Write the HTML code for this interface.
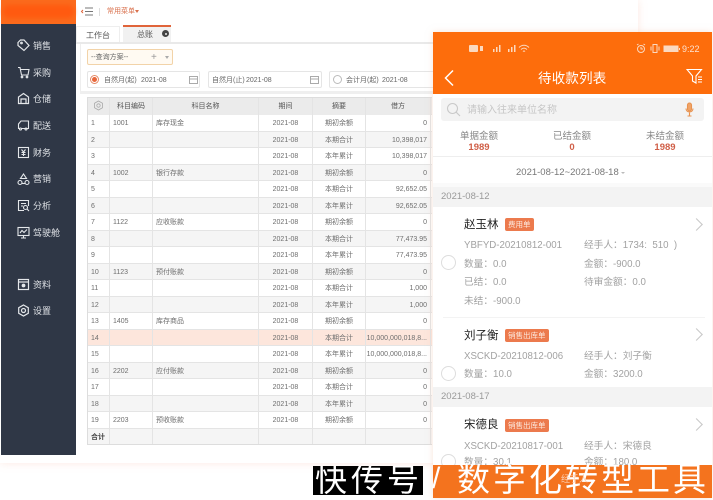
<!DOCTYPE html>
<html><head><meta charset="utf-8">
<style>
*{box-sizing:border-box;margin:0;padding:0}
html,body{width:713px;height:500px;overflow:hidden;background:#fff}
body{position:relative;font-family:"Liberation Sans","Noto Sans CJK SC",sans-serif;color:#666}
#w{position:absolute;left:0;top:0;width:713px;height:500px;filter:blur(.35px)}
.a{position:absolute;white-space:nowrap}
.nav{position:absolute;left:33px;margin-top:1px;color:#dfe2e6;font-size:9px;line-height:14px;white-space:nowrap}
.ic{position:absolute;left:17px;margin-top:1px;width:13px;height:13px}
.tb{position:absolute;left:87px;top:97px;width:345px;height:348px;background:#fff;border:1px solid #ddd;border-right:0;overflow:hidden}
.r{position:absolute;left:0;width:344px;height:16.5px;border-bottom:1px solid #e4e4e4;font-size:7px;line-height:17px;color:#6e6e6e}
.r.g{background:#f5f5f5}
.r.h{background:#fde6dc}
.r span{position:absolute;top:0;height:16.5px;border-right:1px solid #e4e4e4;white-space:nowrap;overflow:hidden}
.c1{left:0;width:22px;padding-left:3px}
.c2{left:22px;width:43px;padding-left:3px}
.c3{left:65px;width:106px;padding-left:3px}
.c4{left:171px;width:54px;text-align:center}
.c5{left:225px;width:53px;text-align:center}
.c6{left:278px;width:65px;text-align:right;padding-right:3px}
.hd{background:#ebebeb;height:17px;line-height:17px;top:0;color:#555}
.inp{position:absolute;top:71px;height:17px;background:#fff;border:1px solid #e5e5e5;border-radius:2px;font-size:7px;line-height:17px;color:#666}
.radio{position:absolute;left:441px;width:15px;height:15px;border:1px solid #ddd;border-radius:50%;background:#fff}
.nm{position:absolute;left:464px;font-size:11.5px;line-height:14px;color:#222;white-space:nowrap}
.tag{position:absolute;left:505px;height:13px;background:#ec7a4d;color:#fde9df;font-size:7.5px;line-height:13px;border-radius:2px;padding:0 3px;white-space:nowrap}
.t{position:absolute;margin-top:1px;font-size:9.700px;line-height:12px;color:#a2a2a2;white-space:nowrap}
.chev{position:absolute;left:692px;width:9px;height:9px;border-top:1px solid #c8c8c8;border-right:1px solid #c8c8c8;transform:rotate(45deg)}
.day{position:absolute;left:433px;width:279px;height:20px;background:#f3f3f3;color:#999;font-size:9.5px;line-height:20px;padding-left:8px}
</style></head><body>
<div id="w">

<!-- desktop window -->
<div class="a" style="left:0;top:0;width:638px;height:463px;background:#fff;box-shadow:0 0 8px rgba(250,190,170,.35)"></div>
<div class="a" style="left:1px;top:0;width:75px;height:24px;background:#fb6a1c"></div>
<div class="a" style="left:3px;top:5px;width:71px;height:13px;background:#ff5a10;border-radius:6px;filter:blur(2px)"></div>
<div class="a" style="left:1px;top:24px;width:75px;height:431px;background:#2f3746"></div>
<div class="a" style="left:76px;top:24px;width:360px;height:431px;background:#fff"></div>

<!-- top bar -->
<svg class="a" style="left:80px;top:6px" width="14" height="11" viewBox="0 0 14 11" fill="none" stroke="#777" stroke-width="1"><path d="M5 2H13M5 5.500H13M5 9H13"/><path d="M3 4L1.500 5.500L3 7" stroke="#e0643a"/></svg>
<div class="a" style="left:99px;top:8px;width:1px;height:8px;background:#ddd"></div>
<div class="a" style="left:107px;top:6px;font-size:7px;line-height:11px;color:#d9704c">常用菜单</div>
<div class="a" style="left:135px;top:10px;border:2.500px solid transparent;border-top:3px solid #d9704c"></div>

<!-- tabs -->
<div class="a" style="left:76px;top:26px;width:44px;height:17px;background:#fff;border:1px solid #eee;border-bottom:0;font-size:8px;line-height:17px;color:#555;text-align:center">工作台</div>
<div class="a" style="left:123px;top:25px;width:48px;height:18px;background:#f1f1f1;border-top:2px solid #e0643a;font-size:8px;line-height:16px;color:#555;padding-left:14px">总账</div>
<div class="a" style="left:162px;top:30px;width:7px;height:7px;border-radius:50%;background:#444"></div>
<div class="a" style="left:164.500px;top:32.500px;width:2px;height:2px;border-radius:50%;background:#eee"></div>
<div class="a" style="left:76px;top:42px;width:360px;height:2px;background:#e9e9e9"></div>
<div class="a" style="left:80px;top:44px;width:356px;height:50px;background:#fff;border-left:1px solid #eee"></div>
<div class="a" style="left:80px;top:91px;width:356px;height:3px;background:#efefef"></div>

<!-- query -->
<div class="a" style="left:87px;top:49px;width:86px;height:16px;background:#fffaf2;border:1px solid #f2d3a8;border-radius:2px;font-size:7px;line-height:16px;color:#666;padding-left:3px">--查询方案--</div>
<div class="a" style="left:151px;top:52px;font-size:10px;line-height:11px;color:#999">+</div>
<div class="a" style="left:165px;top:56px;border:2.500px solid transparent;border-top:3px solid #aaa"></div>

<!-- date filters -->
<div class="inp" style="left:87px;width:113px"><span style="position:absolute;left:16px">自然月(起)</span><span style="position:absolute;left:53px">2021-08</span></div>
<div class="a" style="left:90px;top:75px;width:9px;height:9px;border:1px solid #e58a66;border-radius:50%"></div>
<div class="a" style="left:92px;top:77px;width:5px;height:5px;background:#e8663a;border-radius:50%"></div>
<svg class="a" style="left:189px;top:75px" width="9" height="9" viewBox="0 0 9 9" fill="none" stroke="#aaa"><rect x=".5" y="1.500" width="8" height="7"/><path d="M.5 4H8.500"/></svg>
<div class="inp" style="left:208px;width:114px"><span style="position:absolute;left:3px">自然月(止)</span><span style="position:absolute;left:37px">2021-08</span></div>
<svg class="a" style="left:310px;top:75px" width="9" height="9" viewBox="0 0 9 9" fill="none" stroke="#aaa"><rect x=".5" y="1.500" width="8" height="7"/><path d="M.5 4H8.500"/></svg>
<div class="inp" style="left:329px;width:110px"><span style="position:absolute;left:16px">会计月(起)</span><span style="position:absolute;left:52px">2021-08</span></div>
<div class="a" style="left:333px;top:75px;width:9px;height:9px;border:1px solid #bbb;border-radius:50%;background:#fff"></div>

<!-- sidebar -->
<svg class="ic" style="top:38px" viewBox="0 0 13 13" fill="none" stroke="#e4e7ea" stroke-width="1.200"><path d="M1 3.500L3.500 1H7L12 6.500L7 11.500L1 6.500Z"/><circle cx="4.500" cy="4" r=".8"/></svg><div class="nav" style="top:38px">销售</div>
<svg class="ic" style="top:65px" viewBox="0 0 13 13" fill="none" stroke="#e4e7ea" stroke-width="1.100"><path d="M1 1.500H3L4.500 9H11L12 3.500H3.500"/><circle cx="5" cy="11" r=".8"/><circle cx="10" cy="11" r=".8"/></svg><div class="nav" style="top:65px">采购</div>
<svg class="ic" style="top:91px" viewBox="0 0 13 13" fill="none" stroke="#e4e7ea" stroke-width="1.200"><path d="M1.500 11.500V5L6.500 1.500L11.500 5V11.500Z"/><path d="M4 11.500V7H9V11.500"/></svg><div class="nav" style="top:91px">仓储</div>
<svg class="ic" style="top:118px" viewBox="0 0 13 13" fill="none" stroke="#e4e7ea" stroke-width="1.100"><path d="M4 9.500H11.500V2H4L1.500 5V9.500H2.500"/><circle cx="3.500" cy="10" r="1"/><circle cx="9" cy="10" r="1"/></svg><div class="nav" style="top:118px">配送</div>
<svg class="ic" style="top:145px" viewBox="0 0 13 13" fill="none" stroke="#e4e7ea" stroke-width="1.100"><rect x="1.500" y="1.500" width="10" height="10"/><path d="M4.500 3.500L6.500 6L8.500 3.500M4.500 6.500H8.500M4.500 8.500H8.500M6.500 6V10"/></svg><div class="nav" style="top:145px">财务</div>
<svg class="ic" style="top:172px" viewBox="0 0 13 13" fill="none" stroke="#e4e7ea" stroke-width="1.100"><path d="M6.500 1L9.500 5.500H3.500Z"/><circle cx="3" cy="9.500" r="2"/><circle cx="10" cy="9.500" r="2"/><path d="M5 10.500H8"/></svg><div class="nav" style="top:171px">营销</div>
<svg class="ic" style="top:198px" viewBox="0 0 13 13" fill="none" stroke="#e4e7ea" stroke-width="1.100"><path d="M11.500 7V1.500H1.500V11.500H7"/><circle cx="8.500" cy="8.500" r="2"/><path d="M10 10L12 12M4 4.500H9M4 7H6"/></svg><div class="nav" style="top:198px">分析</div>
<svg class="ic" style="top:225px" viewBox="0 0 13 13" fill="none" stroke="#e4e7ea" stroke-width="1.100"><rect x="1" y="1.500" width="11" height="8"/><path d="M3 7L5 4.500L7 6.500L10 3.500M6.500 9.500V12M4 12H9"/></svg><div class="nav" style="top:225px">驾驶舱</div>
<svg class="ic" style="top:277px" viewBox="0 0 13 13" fill="none" stroke="#e4e7ea" stroke-width="1.200"><rect x="1.500" y="1.500" width="10" height="10"/><path d="M1.500 4H11.500"/><circle cx="6.500" cy="7.500" r="1.300" fill="#e4e7ea"/></svg><div class="nav" style="top:277px">资料</div>
<svg class="ic" style="top:303px" viewBox="0 0 13 13" fill="none" stroke="#e4e7ea" stroke-width="1.200"><path d="M6.500 1L11.300 3.750V9.250L6.500 12L1.700 9.250V3.750Z"/><circle cx="6.500" cy="6.500" r="2"/></svg><div class="nav" style="top:303px">设置</div>

<!-- table -->
<div class="tb">
<div class="r hd" style="height:17px;background:#ebebeb"><span class="c1 hd"></span><span class="c2 hd" style="text-align:center;padding:0">科目编码</span><span class="c3 hd" style="text-align:center;padding:0">科目名称</span><span class="c4 hd">期间</span><span class="c5 hd">摘要</span><span class="c6 hd" style="text-align:center;padding:0">借方</span></div>
<div class="r" style="top:17px"><span class="c1">1</span><span class="c2">1001</span><span class="c3">库存现金</span><span class="c4">2021-08</span><span class="c5">期初余额</span><span class="c6">0</span></div>
<div class="r g" style="top:33.500px"><span class="c1">2</span><span class="c2"></span><span class="c3"></span><span class="c4">2021-08</span><span class="c5">本期合计</span><span class="c6">10,398,017</span></div>
<div class="r" style="top:50px"><span class="c1">3</span><span class="c2"></span><span class="c3"></span><span class="c4">2021-08</span><span class="c5">本年累计</span><span class="c6">10,398,017</span></div>
<div class="r g" style="top:66.500px"><span class="c1">4</span><span class="c2">1002</span><span class="c3">银行存款</span><span class="c4">2021-08</span><span class="c5">期初余额</span><span class="c6">0</span></div>
<div class="r" style="top:83px"><span class="c1">5</span><span class="c2"></span><span class="c3"></span><span class="c4">2021-08</span><span class="c5">本期合计</span><span class="c6">92,652.05</span></div>
<div class="r g" style="top:99.500px"><span class="c1">6</span><span class="c2"></span><span class="c3"></span><span class="c4">2021-08</span><span class="c5">本年累计</span><span class="c6">92,652.05</span></div>
<div class="r" style="top:116px"><span class="c1">7</span><span class="c2">1122</span><span class="c3">应收账款</span><span class="c4">2021-08</span><span class="c5">期初余额</span><span class="c6">0</span></div>
<div class="r g" style="top:132.500px"><span class="c1">8</span><span class="c2"></span><span class="c3"></span><span class="c4">2021-08</span><span class="c5">本期合计</span><span class="c6">77,473.95</span></div>
<div class="r" style="top:149px"><span class="c1">9</span><span class="c2"></span><span class="c3"></span><span class="c4">2021-08</span><span class="c5">本年累计</span><span class="c6">77,473.95</span></div>
<div class="r g" style="top:165.500px"><span class="c1">10</span><span class="c2">1123</span><span class="c3">预付账款</span><span class="c4">2021-08</span><span class="c5">期初余额</span><span class="c6">0</span></div>
<div class="r" style="top:182px"><span class="c1">11</span><span class="c2"></span><span class="c3"></span><span class="c4">2021-08</span><span class="c5">本期合计</span><span class="c6">1,000</span></div>
<div class="r g" style="top:198.500px"><span class="c1">12</span><span class="c2"></span><span class="c3"></span><span class="c4">2021-08</span><span class="c5">本年累计</span><span class="c6">1,000</span></div>
<div class="r" style="top:215px"><span class="c1">13</span><span class="c2">1405</span><span class="c3">库存商品</span><span class="c4">2021-08</span><span class="c5">期初余额</span><span class="c6">0</span></div>
<div class="r h" style="top:231.500px"><span class="c1">14</span><span class="c2"></span><span class="c3"></span><span class="c4">2021-08</span><span class="c5">本期合计</span><span class="c6">10,000,000,018,8...</span></div>
<div class="r" style="top:248px"><span class="c1">15</span><span class="c2"></span><span class="c3"></span><span class="c4">2021-08</span><span class="c5">本年累计</span><span class="c6">10,000,000,018,8...</span></div>
<div class="r g" style="top:264.500px"><span class="c1">16</span><span class="c2">2202</span><span class="c3">应付账款</span><span class="c4">2021-08</span><span class="c5">期初余额</span><span class="c6">0</span></div>
<div class="r" style="top:281px"><span class="c1">17</span><span class="c2"></span><span class="c3"></span><span class="c4">2021-08</span><span class="c5">本期合计</span><span class="c6">0</span></div>
<div class="r g" style="top:297.500px"><span class="c1">18</span><span class="c2"></span><span class="c3"></span><span class="c4">2021-08</span><span class="c5">本年累计</span><span class="c6">0</span></div>
<div class="r" style="top:314px"><span class="c1">19</span><span class="c2">2203</span><span class="c3">预收账款</span><span class="c4">2021-08</span><span class="c5">期初余额</span><span class="c6">0</span></div>
<div class="r g" style="top:330.500px;height:17px"><span class="c1" style="font-weight:bold;color:#444">合计</span><span class="c2"></span><span class="c3"></span><span class="c4"></span><span class="c5"></span><span class="c6"></span></div>
</div>
<svg class="a" style="left:93px;top:100px" width="11" height="11" viewBox="0 0 11 11" fill="none" stroke="#aaa" stroke-width=".8"><path d="M5.500 1L9.500 3.250V7.750L5.500 10L1.500 7.750V3.250Z"/><circle cx="5.500" cy="5.500" r="1.700"/></svg>

<!-- phone -->
<div class="a" style="left:433px;top:32px;width:279px;height:466px;background:#fff;box-shadow:0 0 6px rgba(240,200,180,.5)"></div>
<div class="a" style="left:433px;top:32px;width:279px;height:62px;background:#fd6d0c"></div>
<div class="a" style="left:469px;top:45px;width:9px;height:7px;background:#fbd9c0;border-radius:1px"></div>
<div class="a" style="left:480px;top:46px;width:3px;height:5px;background:#fbd9c0"></div>
<svg class="a" style="left:486px;top:44px" width="44" height="10" viewBox="0 0 44 10" fill="#fbd9c0"><path d="M7 8H8.500V5H7ZM10 8H11.500V3H10ZM13 8H14.500V1H13ZM22 8H23.500V5H22ZM25 8H26.500V3H25ZM28 8H29.500V1H28Z"/><path d="M33 3.500C36 .5 40 .5 43 3.500M35 5.500C37 3.700 39 3.700 41 5.500M37 7.500C37.700 6.800 38.300 6.800 39 7.500" fill="none" stroke="#fbd9c0"/></svg>
<svg class="a" style="left:636px;top:43px" width="50" height="11" viewBox="0 0 50 11" fill="none" stroke="#fbd9c0"><circle cx="5" cy="6" r="3.500"/><path d="M5 4V6H7M1 2L2.500 1M9 2L7.500 1"/><rect x="17" y="1.500" width="4" height="8"/><path d="M15 3.500V7.500M23 3.500V7.500"/><rect x="28" y="3" width="14" height="5.500" fill="#fbd9c0"/><path d="M43.500 5V7"/></svg>
<div class="a" style="left:682px;top:43px;font-size:9px;line-height:12px;color:#fde3d2">9:22</div>
<svg class="a" style="left:443px;top:69px" width="13" height="18" viewBox="0 0 13 18" fill="none" stroke="#fff" stroke-width="1.500"><path d="M10 1.500L2.500 9L10 16.500"/></svg>
<div class="a" style="left:538px;top:70px;font-size:13.500px;line-height:18px;color:#fff;letter-spacing:.2px">待收款列表</div>
<svg class="a" style="left:686px;top:68px" width="18" height="17" viewBox="0 0 18 17" fill="none" stroke="#fff" stroke-width="1.100"><path d="M1 1.500H15.500L10 8V15L6.500 13V8Z"/><path d="M12 9H16M12 11.500H16M12 14H16" stroke-width="1"/></svg>

<!-- search -->
<div class="a" style="left:441px;top:98px;width:263px;height:23px;background:#f3f3f3;border-radius:3px"></div>
<svg class="a" style="left:446px;top:102px" width="15" height="15" viewBox="0 0 15 15" fill="none" stroke="#c9c9c9" stroke-width="1.100"><circle cx="6.500" cy="6.500" r="5"/><path d="M10.300 10.300L14 14"/></svg>
<div class="a" style="left:467px;top:105px;font-size:10px;line-height:12px;color:#c6c6c6">请输入往来单位名称</div>
<svg class="a" style="left:685px;top:102px" width="9" height="15" viewBox="0 0 9 15" fill="none" stroke="#e8924f" stroke-width="1.100"><rect x="2.500" y="1" width="4" height="8" rx="2" fill="#f0a468"/><path d="M1 6.500C1 11 8 11 8 6.500M4.500 10.500V14M2.500 14H6.500"/></svg>

<!-- summary -->
<div class="a" style="left:439px;top:131px;width:80px;text-align:center;font-size:9.500px;line-height:12px;color:#888">单据金额</div>
<div class="a" style="left:439px;top:142px;width:80px;text-align:center;font-size:9.500px;line-height:12px;font-weight:bold;color:#d05f47">1989</div>
<div class="a" style="left:532px;top:131px;width:80px;text-align:center;font-size:9.500px;line-height:12px;color:#888">已结金额</div>
<div class="a" style="left:532px;top:142px;width:80px;text-align:center;font-size:9.500px;line-height:12px;font-weight:bold;color:#d05f47">0</div>
<div class="a" style="left:625px;top:131px;width:80px;text-align:center;font-size:9.500px;line-height:12px;color:#888">未结金额</div>
<div class="a" style="left:625px;top:142px;width:80px;text-align:center;font-size:9.500px;line-height:12px;font-weight:bold;color:#d05f47">1989</div>
<div class="a" style="left:433px;top:156px;width:279px;height:1px;background:#eee"></div>
<div class="a" style="left:516px;top:167px;font-size:9.500px;line-height:12px;color:#777">2021-08-12~2021-08-18</div>
<div class="a" style="left:621px;top:172px;border:2px solid transparent;border-top:2.500px solid #bbb"></div>
<div class="a" style="left:433px;top:183px;width:279px;height:4px;background:#fafafa"></div>

<div class="day" style="top:187px">2021-08-12</div>

<div class="nm" style="top:218px">赵玉林</div><div class="tag" style="top:218px">费用单</div><div class="chev" style="top:220px"></div>
<div class="t" style="left:464px;top:239px">YBFYD-20210812-001</div><div class="t" style="left:584px;top:239px">经手人：1734:&nbsp;&nbsp;510&nbsp;&nbsp;)</div>
<div class="radio" style="top:255px"></div>
<div class="t" style="left:464px;top:258px">数量：0.0</div><div class="t" style="left:584px;top:258px">金额：-900.0</div>
<div class="t" style="left:464px;top:276px">已结：0.0</div><div class="t" style="left:584px;top:276px">待审金额：0.0</div>
<div class="t" style="left:464px;top:295px">未结：-900.0</div>
<div class="a" style="left:443px;top:317px;width:262px;height:1px;background:#f3f3f3"></div>

<div class="nm" style="top:329px">刘子衡</div><div class="tag" style="top:329px">销售出库单</div><div class="chev" style="top:330px"></div>
<div class="t" style="left:464px;top:350px">XSCKD-20210812-006</div><div class="t" style="left:584px;top:350px">经手人：刘子衡</div>
<div class="radio" style="top:366px"></div>
<div class="t" style="left:464px;top:368px">数量：10.0</div><div class="t" style="left:584px;top:368px">金额：3200.0</div>

<div class="day" style="top:387px">2021-08-17</div>

<div class="nm" style="top:418px">宋德良</div><div class="tag" style="top:419px">销售出库单</div><div class="chev" style="top:420px"></div>
<div class="t" style="left:464px;top:440px">XSCKD-20210817-001</div><div class="t" style="left:584px;top:440px">经手人：宋德良</div>
<div class="radio" style="top:454px"></div>
<div class="t" style="left:464px;top:456px">数量：30.1</div><div class="t" style="left:584px;top:456px">金额：180.0</div>
</div>

<!-- watermark -->
<div class="a" style="left:433px;top:465px;width:279px;height:33px;background:#f4731e"></div>
<div class="a" style="left:313px;top:466px;width:110px;height:29px;background:#000;overflow:hidden;color:#fff;font-size:32px;line-height:29px;letter-spacing:4px;padding-left:2px">快传号</div>
<div class="a" style="left:432px;top:462px;font-size:30px;line-height:34px;color:#fff">/</div>
<div class="a" style="left:457px;top:463px;font-size:33px;line-height:33px;color:#fff;letter-spacing:3px">数字化转型工具</div>
<div class="a" style="left:561px;top:474px;font-size:9px;line-height:11px;color:#fbd0b4">经手人</div>
</body></html>
